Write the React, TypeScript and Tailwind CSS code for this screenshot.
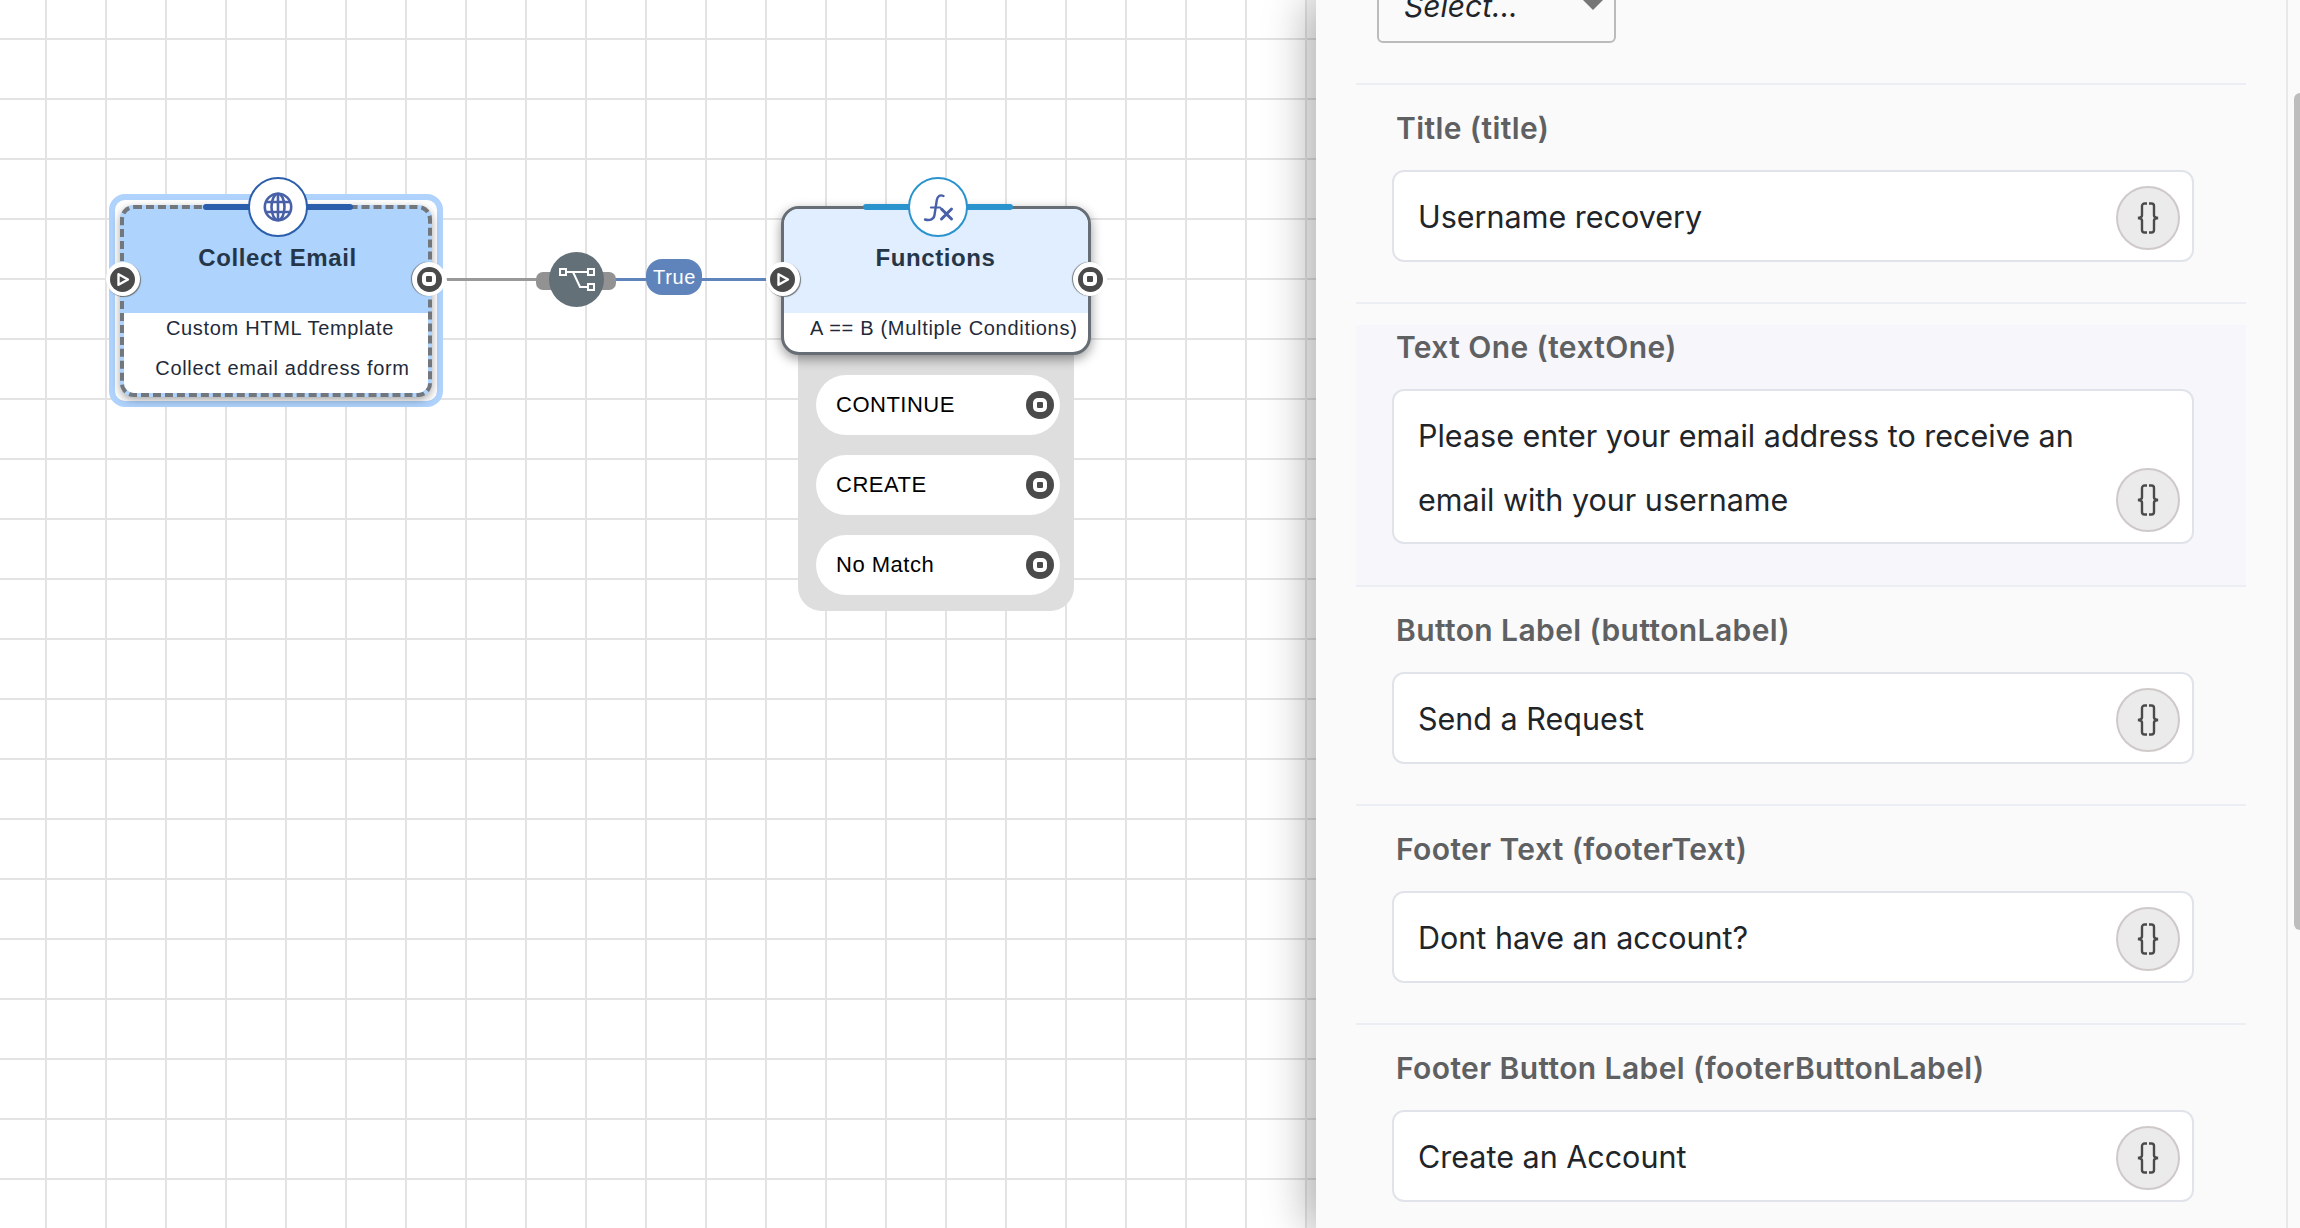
import React from "react";

const Braces = () => (
  <svg width="24" height="32" viewBox="0 0 24 32" fill="none" stroke="#4a4a4a" strokeWidth="2.4">
    <path d="M11 1.5H8.5A2.5 2.5 0 0 0 6 4v9.5q0 2-4 2.5q4 .5 4 2.5V28a2.5 2.5 0 0 0 2.5 2.5H11" />
    <path d="M13 1.5h2.5A2.5 2.5 0 0 1 18 4v9.5q0 2 4 2.5q-4 .5-4 2.5V28a2.5 2.5 0 0 1-2.5 2.5H13" />
  </svg>
);

const VarButton = () => (
  <div className="flex h-[64px] w-[64px] shrink-0 items-center justify-center rounded-full border-2 border-[#cfcac9] bg-[#ebebeb]">
    <Braces />
  </div>
);

const Label = ({ children }: { children: React.ReactNode }) => (
  <div className="ml-[40px] h-[36px] text-[30px] leading-[36px] font-semibold tracking-[0.4px] text-[#5f6062]">{children}</div>
);

const Field = ({ label, value }: { label: string; value: string }) => (
  <div className="border-b-2 border-[#ebeef3] pt-[25px] pb-[40px]">
    <Label>{label}</Label>
    <div className="mt-[24px] ml-[36px] flex h-[92px] w-[802px] items-center justify-between rounded-[12px] border-2 border-[#e0e4ea] bg-white pr-[12px] pl-[24px] text-[30.5px] text-[#212529]">
      <span className="pt-[2px]">{value}</span>
      <div className="mt-[3px]">
        <VarButton />
      </div>
    </div>
  </div>
);

const StopGlyph = () => (
  <div className="flex h-[14px] w-[14px] items-center justify-center rounded-[5px] bg-white">
    <div className="h-[6px] w-[6px] rounded-[1px] bg-[#4a4a4a]" />
  </div>
);

const Port = ({ x, y, kind }: { x: number; y: number; kind: "in" | "out" }) => (
  <div
    className={
      "absolute z-20 flex h-[34px] w-[34px] items-center justify-center rounded-full bg-white " +
      (kind === "in" ? "shadow-[1px_1px_1px_#70767b]" : "shadow-[-1px_0_1px_#70767b]")
    }
    style={{ left: x - 17, top: y - 17 }}
  >
    <div className="flex h-[25px] w-[25px] items-center justify-center rounded-full bg-[#4a4a4a]">
      {kind === "in" ? (
        <svg width="15" height="15" viewBox="0 0 15 15" fill="none" stroke="white" strokeWidth="2.4" strokeLinejoin="round">
          <path d="M3.5 2.2 13 7.5 3.5 12.8Z" />
        </svg>
      ) : (
        <StopGlyph />
      )}
    </div>
  </div>
);

const Badge = ({ cx, barColor, barFrom, barTo, children }: { cx: number; barColor: string; barFrom: number; barTo: number; children: React.ReactNode }) => (
  <>
    <div className="absolute z-10 h-[6px] rounded-full" style={{ left: barFrom, width: barTo - barFrom, top: 204, backgroundColor: barColor }} />
    <div
      className="absolute z-10 flex h-[60px] w-[60px] items-center justify-center rounded-full border-2 bg-white"
      style={{ left: cx - 30, top: 177, borderColor: barColor }}
    >
      {children}
    </div>
  </>
);

const Outcome = ({ label }: { label: string }) => (
  <div className="flex h-[60px] items-center justify-between rounded-full bg-white pr-[6px] pl-[20px] text-[22px] tracking-[0.5px] text-black">
    <span className="pb-[1px]">{label}</span>
    <div className="flex h-[28px] w-[28px] items-center justify-center rounded-full bg-[#4a4a4a]">
      <StopGlyph />
    </div>
  </div>
);

export default function App() {
  return (
    <div className="flex h-[1228px] w-[2300px] overflow-hidden bg-white font-['Liberation_Sans',sans-serif]">
      <div className="relative min-w-0 flex-1 bg-white bg-[linear-gradient(to_right,#e3e3e3_2px,transparent_2px),linear-gradient(to_bottom,#e3e3e3_2px,transparent_2px)] bg-[size:60px_60px] bg-[position:45px_38px]">
        {/* Edges */}
        <div className="absolute top-[277.5px] left-[447px] h-[3px] w-[92px] bg-[#999999]" />
        <div className="absolute top-[277.5px] left-[612px] h-[3px] w-[156px] bg-[#5f84bc]" />

        {/* Router */}
        <div className="absolute top-[272px] left-[536px] h-[18px] w-[80px] rounded-[7px] bg-[#929292]" />
        <div className="absolute top-[252px] left-[549px] flex h-[55px] w-[55px] items-center justify-center rounded-full bg-[#637078]">
          <svg width="36" height="24" viewBox="0 0 36 24" fill="none" stroke="white" strokeWidth="2">
            <rect x="1" y="1" width="6" height="6" />
            <rect x="29" y="1" width="6" height="6" />
            <rect x="29" y="16" width="6" height="6" />
            <path d="M7 4h22M14 4l7 15h8" />
          </svg>
        </div>
        <div className="absolute top-[259px] left-[646px] flex h-[36px] w-[56px] items-center justify-center rounded-[16px] bg-[#5f84bc] pl-[1px] text-[20px] tracking-[0.6px] text-white">
          True
        </div>

        {/* Collect Email */}
        <div className="absolute top-[194px] left-[109px] h-[213px] w-[334px] rounded-[16px] border-[6px] border-[#afd3fd] bg-white px-[5px] pt-[5px] pb-[4px]">
          <div className="h-full w-full rounded-[14px] border-4 border-dashed border-[#72767d] bg-[#aed3fd] shadow-[0_3px_8px_rgba(0,0,0,0.35)]">
            <div className="flex h-[104px] items-start justify-center pt-[35px] pl-[3px] text-[24px] leading-[28px] font-bold tracking-[0.6px] text-[#253649]">
              Collect Email
            </div>
            <div className="h-[80px] rounded-b-[10px] bg-white text-center text-[20px] tracking-[0.68px] text-[#1f2a3a]">
              <div className="pt-[3px] pl-[8px] leading-[24px]">Custom HTML Template</div>
              <div className="mt-[16px] pl-[13px] leading-[24px]">Collect email address form</div>
            </div>
          </div>
        </div>
        <Badge cx={278} barColor="#2b5fab" barFrom={203} barTo={353}>
          <svg width="30" height="30" viewBox="0 0 30 30" fill="none" stroke="#4860a8" strokeWidth="2.6">
            <circle cx="15" cy="15" r="13.2" />
            <ellipse cx="15" cy="15" rx="6.5" ry="13.2" />
            <path d="M15 2v26M3.5 10h23M3.5 20h23" />
          </svg>
        </Badge>
        <Port x={122.5} y={279} kind="in" />
        <Port x={429} y={279} kind="out" />

        {/* Functions */}
        <div className="absolute top-[340px] left-[798px] h-[271px] w-[276px] rounded-b-[24px] bg-[#dedede] pt-[35px] pr-[14px] pl-[18px]">
          <div className="flex flex-col gap-[20px]">
            <Outcome label="CONTINUE" />
            <Outcome label="CREATE" />
            <Outcome label="No Match" />
          </div>
        </div>
        <div className="absolute top-[206px] left-[781px] h-[149px] w-[310px] overflow-hidden rounded-[18px] border-[3px] border-[#676d75] bg-white shadow-[0_4px_12px_rgba(0,0,0,0.4)]">
          <div className="flex h-[104px] items-start justify-center bg-[#e0eeff] pt-[35px] pr-[1px] text-[24px] leading-[28px] font-bold tracking-[0.6px] text-[#253649]">
            Functions
          </div>
          <div className="pt-[3px] pl-[26px] text-[20px] leading-[24px] tracking-[0.7px] whitespace-nowrap text-[#1f2a3a]">
            A == B (Multiple Conditions)
          </div>
        </div>
        <Badge cx={938} barColor="#2a93ce" barFrom={863} barTo={1013}>
          <svg width="32" height="32" viewBox="0 0 32 32" fill="none" stroke="#4860a8" strokeLinecap="round">
            <path d="M21.5 5C18 3.5 15.5 5 14.8 9L12.5 24C12 28 8 30 3 28.5" strokeWidth="2.4" />
            <path d="M9 16.5h9" strokeWidth="2.2" />
            <path d="M19.5 18l10 10M29.5 18l-10 10" strokeWidth="3" />
          </svg>
        </Badge>
        <Port x={782.5} y={279} kind="in" />
        <Port x={1090} y={279} kind="out" />
      </div>

      {/* Side panel */}
      <div className="relative z-30 flex h-full w-[984px] shrink-0 bg-[#fafafa] font-['Inter',sans-serif] shadow-[-10px_0_40px_rgba(0,0,0,0.28),-9px_0_0_rgba(0,0,0,0.03)]">
        <div className="w-[930px] shrink-0 pl-[40px]">
          <div className="-mt-[17px] pb-[40px] pl-[21px]">
            <div className="relative flex h-[60px] w-[239px] items-center rounded-[6px] border-2 border-[#bbbbbb] pb-[13px] pl-[25px] text-[30px] text-[#212529] italic">
              Select...
              <svg className="absolute top-[14px] right-[10px]" width="22" height="11" viewBox="0 0 22 11" fill="#777777">
                <path d="M0 0h22L11 11Z" />
              </svg>
            </div>
          </div>
          <div className="h-[2px] w-[890px] bg-[#ebeef3]" />
          <div className="w-[890px]">
            <Field label="Title (title)" value="Username recovery" />
            <div className="border-b-2 border-[#ebeef3] pt-[21px]">
              <div className="bg-[#f6f6fb] pt-[4px] pb-[41px]">
                <Label>Text One (textOne)</Label>
                <div className="relative mt-[24px] ml-[36px] h-[155px] w-[802px] rounded-[12px] border-2 border-[#e0e4ea] bg-white pt-[13px] pr-[80px] pl-[24px] text-[30.5px] leading-[64px] text-[#212529]">
                  Please enter your email address to receive an email with your username
                  <div className="absolute right-[12px] bottom-[10px]">
                    <VarButton />
                  </div>
                </div>
              </div>
            </div>
            <Field label="Button Label (buttonLabel)" value="Send a Request" />
            <Field label="Footer Text (footerText)" value="Dont have an account?" />
            <Field label="Footer Button Label (footerButtonLabel)" value="Create an Account" />
          </div>
        </div>
        <div className="ml-[40px] h-full w-[2px] bg-[#e8e8e8]" />
        <div className="absolute top-[93px] right-0 h-[837px] w-[6px] rounded-l-[6px] bg-[#bdbdbd]" />
      </div>
    </div>
  );
}
